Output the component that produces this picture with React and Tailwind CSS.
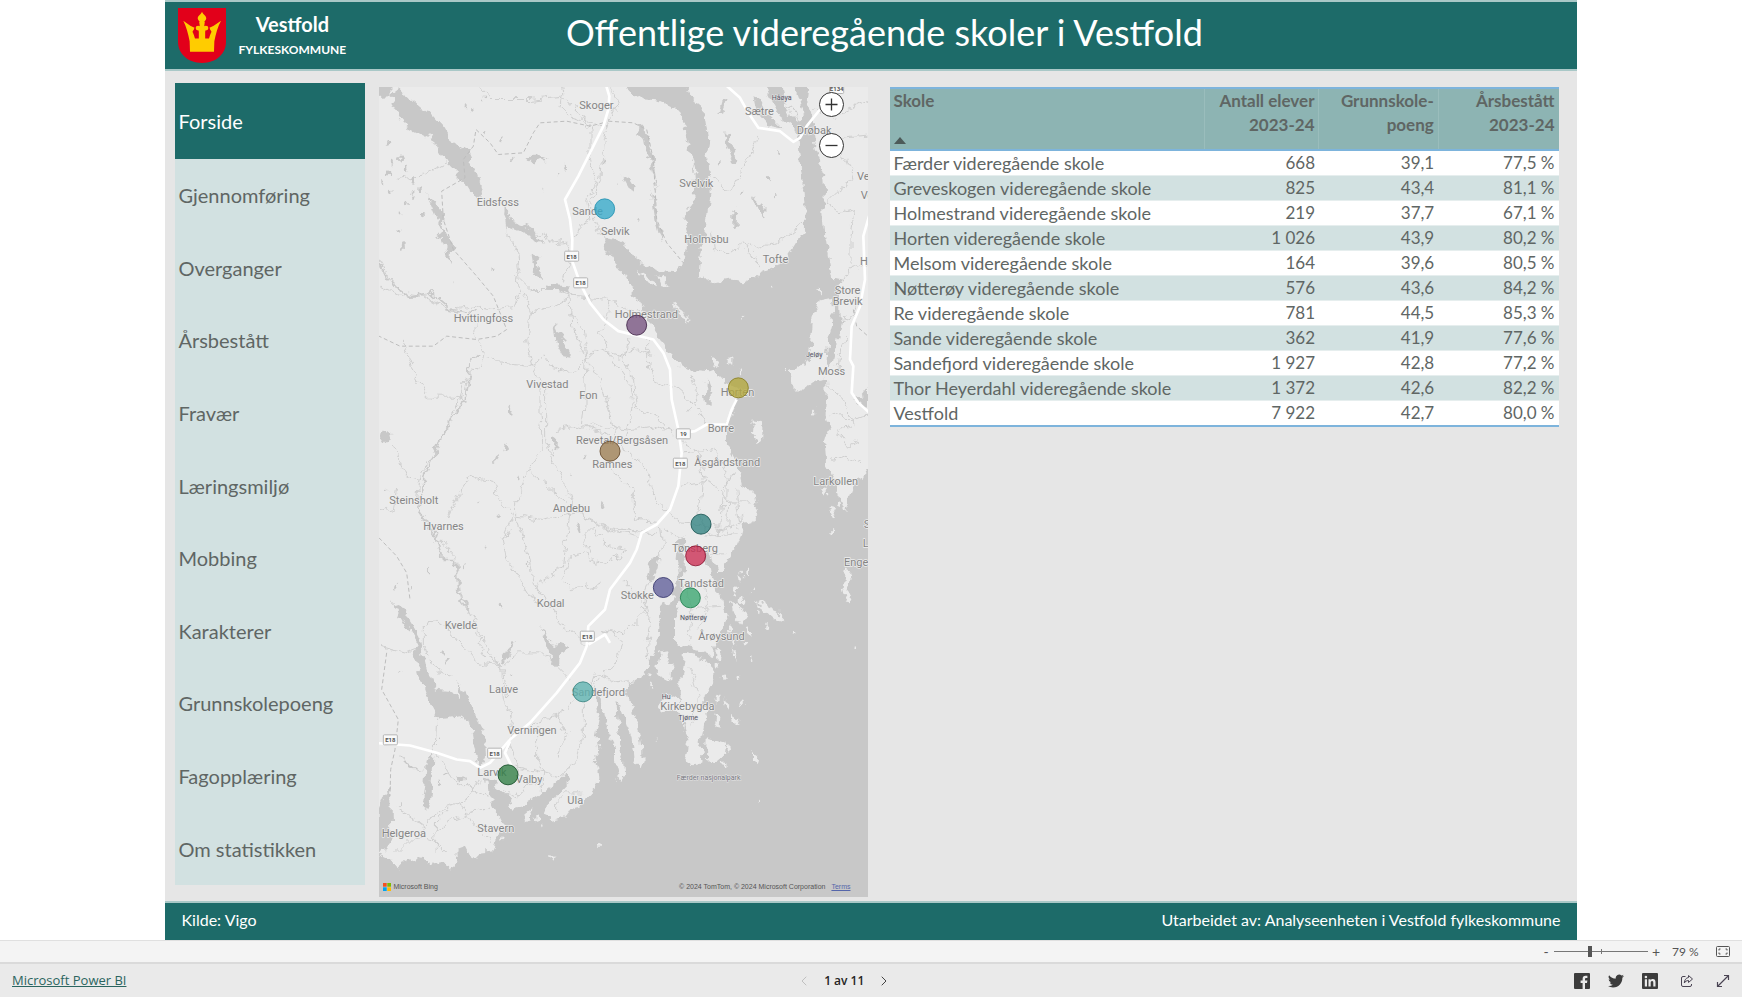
import { useState } from "react";
import { ChevronLeft, ChevronRight } from "lucide-react";

const pages = [
  "Forside",
  "Gjennomføring",
  "Overganger",
  "Årsbestått",
  "Fravær",
  "Læringsmiljø",
  "Mobbing",
  "Karakterer",
  "Grunnskolepoeng",
  "Fagopplæring",
  "Om statistikken",
];

const schools = [
  ["Færder videregående skole", "668", "39,1", "77,5 %"],
  ["Greveskogen videregående skole", "825", "43,4", "81,1 %"],
  ["Holmestrand videregående skole", "219", "37,7", "67,1 %"],
  ["Horten videregående skole", "1 026", "43,9", "80,2 %"],
  ["Melsom videregående skole", "164", "39,6", "80,5 %"],
  ["Nøtterøy videregående skole", "576", "43,6", "84,2 %"],
  ["Re videregående skole", "781", "44,5", "85,3 %"],
  ["Sande videregående skole", "362", "41,9", "77,6 %"],
  ["Sandefjord videregående skole", "1 927", "42,8", "77,2 %"],
  ["Thor Heyerdahl videregående skole", "1 372", "42,6", "82,2 %"],
  ["Vestfold", "7 922", "42,7", "80,0 %"],
];

// Map units: 3 per pixel at full size
const places = [
  ["Skoger", 628, 88],
  ["Sætre", 1125, 105],
  ["Drøbak", 1280, 162],
  ["Svelvik", 928, 321],
  ["Eidsfoss", 320, 378],
  ["Sande", 607, 405],
  ["Selvik", 693, 467],
  ["Holmsbu", 943, 489],
  ["Tofte", 1178, 551],
  ["Ve", 1461, 300],
  ["Vo", 1472, 358],
  ["H", 1470, 556],
  ["Store", 1394, 644],
  ["Brevik", 1388, 676],
  ["Holmestrand", 734, 714],
  ["Hvittingfoss", 251, 727],
  ["Moss", 1344, 886],
  ["Vivestad", 469, 926],
  ["Fon", 628, 957],
  ["Horten", 1052, 948],
  ["Borre", 1013, 1058],
  ["Revetal/Bergsåsen", 618, 1093],
  ["Ramnes", 667, 1164],
  ["Åsgårdstrand", 973, 1160],
  ["Larkollen", 1330, 1217],
  ["Steinsholt", 58, 1274],
  ["Hvarnes", 160, 1350],
  ["Andebu", 548, 1297],
  ["S", 1481, 1345],
  ["L", 1478, 1403],
  ["Tønsberg", 906, 1417],
  ["Enge", 1422, 1460],
  ["Tandstad", 925, 1521],
  ["Stokke", 752, 1557],
  ["Kodal", 500, 1583],
  ["Kvelde", 224, 1648],
  ["Årøysund", 985, 1680],
  ["Lauve", 357, 1840],
  ["Sandefjord", 605, 1848],
  ["Kirkebygda", 871, 1892],
  ["Verningen", 412, 1963],
  ["Larvik", 322, 2088],
  ["Valby", 437, 2109],
  ["Ula", 592, 2174],
  ["Stavern", 322, 2258],
  ["Helgeroa", 35, 2271],
];

const smallPlaces = [
  ["Håøya", 1205, 60],
  ["Jeløy", 1308, 833],
  ["Nøtterøy", 930, 1621],
  ["Hu", 875, 1858],
  ["Tjøme", 925, 1921],
];

const shields = [
  ["E134", 1400, 27],
  ["E18", 605, 530],
  ["E18", 632, 610],
  ["19", 940, 1063],
  ["E18", 931, 1151],
  ["E18", 652, 1670],
  ["E18", 61, 1981],
  ["E18", 374, 2021],
];

const markers = [
  ["Sande", 704, 388, "#35a9c9", "#2592b1"],
  ["Holmestrand", 800, 737, "#76527f", "#3f2347"],
  ["Horten", 1105, 925, "#b3a83c", "#8a7f23"],
  ["Re", 720, 1115, "#9c7d52", "#65492a"],
  ["Greveskogen", 993, 1334, "#318180", "#1b5654"],
  ["Færder", 977, 1429, "#cb2d52", "#8c1533"],
  ["Melsom", 880, 1524, "#605f9a", "#34346b"],
  ["Nøtterøy", 961, 1555, "#3aa56f", "#1f7f4d"],
  ["Sandefjord", 639, 1837, "#5cb2b0", "#3a8583"],
  ["Thor Heyerdahl", 414, 2086, "#2f7d44", "#18502a"],
];

const sea =
  "M765 -20 765 21 790 40 820 60 860 62 900 72 925 95 940 130 950 180 960 215 972 260 975 310 967 350 970 375 950 400 945 430 955 460 950 490 945 520 938 560 920 578 870 575 830 560 790 530 760 490 730 475 700 470 705 510 730 545 745 572 770 580 780 620 800 660 820 690 840 730 862 762 880 790 900 830 930 855 950 868 985 872 1010 875 1035 870 1050 890 1075 915 1100 925 1100 970 1080 1010 1067 1040 1065 1080 1080 1110 1095 1140 1110 1190 1120 1230 1160 1235 1165 1270 1150 1325 1120 1330 1112 1370 1100 1400 1075 1430 1065 1460 1045 1480 1030 1440 1010 1400 1000 1440 960 1445 945 1380 925 1375 920 1440 930 1500 915 1520 905 1560 885 1570 870 1610 865 1690 850 1715 835 1760 815 1795 770 1808 772 1840 790 1890 805 1940 815 1990 818 2040 808 2065 790 2035 785 1980 768 1930 755 1885 740 1870 742 1925 750 1970 750 2000 762 2045 765 2085 750 2105 735 2050 735 2000 715 1960 700 1900 690 1850 675 1830 680 1890 690 1920 680 1970 685 2010 680 2050 688 2090 680 2125 650 2155 640 2180 600 2190 580 2215 540 2225 525 2200 532 2165 560 2150 598 2110 590 2085 560 2110 530 2135 490 2160 460 2180 430 2188 412 2145 385 2125 372 2105 345 2095 350 2140 370 2180 385 2210 400 2240 378 2270 370 2315 330 2320 310 2340 290 2300 262 2310 265 2350 240 2365 225 2345 200 2360 170 2345 130 2335 100 2345 88 2370 60 2335 27 2320 -20 2310 -20 2500 1540 2500 1540 1160 1494 1170 1480 1190 1460 1200 1440 1250 1425 1290 1410 1250 1400 1210 1385 1180 1368 1150 1365 1090 1380 1040 1365 1000 1370 940 1368 895 1340 900 1300 930 1268 930 1262 870 1305 860 1320 830 1325 770 1330 720 1350 662 1385 655 1392 720 1375 780 1370 840 1380 870 1400 790 1412 720 1410 640 1415 600 1390 595 1378 540 1366 470 1360 400 1365 340 1362 280 1345 230 1335 180 1325 120 1318 90 1310 60 1320 -20 1275 -20 1270 30 1290 60 1300 100 1290 125 1260 110 1240 60 1230 -20 1180 -20 1200 60 1230 110 1270 140 1285 180 1290 230 1300 300 1306 370 1308 450 1275 490 1250 530 1220 560 1180 575 1150 590 1120 605 1080 600 1040 608 1010 600 985 590 990 540 1003 470 1018 400 1025 330 1020 280 1010 230 1018 180 1010 130 1005 100 990 85 975 60 950 40 935 -20Z";

const islands = [
  "M948 1360 1004 1360 1002 1420 1018 1500 948 1500 942 1430Z",
  "M940 1480 990 1470 1030 1500 1060 1560 1070 1610 1040 1680 1025 1730 990 1712 945 1700 915 1690 915 1620 930 1570Z",
  "M945 1725 995 1740 1030 1760 1030 1800 1000 1850 1010 1900 1000 1950 990 2000 998 2040 965 2060 948 2035 955 1985 940 1930 925 1870 935 1800Z",
  "M1010 1970 1040 1980 1070 1990 1065 2030 1030 2045 1008 2035Z",
  "M870 1720 890 1715 905 1760 900 1805 880 1800 860 1780Z",
  "M890 1840 920 1850 935 1900 905 1890 870 1900Z",
  "M1145 1020 1180 1025 1180 1080 1165 1090 1143 1065Z",
  "M1425 1470 1445 1480 1435 1540 1450 1570 1430 1565 1418 1520Z",
  "M1152 2015 1165 2025 1160 2055 1152 2040Z",
  "M865 590 885 595 905 620 880 625Z",
  "M800 570 835 590 855 620 830 610Z",
  "M905 670 930 690 960 730 930 715Z",
  "M1115 705 1123 712 1118 730Z",
  "M1070 840 1090 830 1090 855 1070 855Z",
  "M1020 830 1040 840 1050 860 1020 850Z",
  "M1350 1225 1372 1230 1360 1242Z",
  "M1378 1285 1400 1290 1390 1310Z",
  "M1335 630 1350 628 1350 645Z",
  "M530 2330 560 2332 545 2340Z",
  "M460 2205 480 2190 485 2220 465 2225Z",
  "M1085 1560 1105 1580 1130 1610 1120 1640 1095 1610Z",
  "M1160 1560 1180 1575 1215 1590 1250 1625 1215 1620 1180 1590Z",
  "M1040 1700 1055 1715 1050 1740 1038 1730Z",
  "M1080 1900 1105 1920 1100 1945 1085 1930Z",
  "M1035 1900 1048 1920 1045 1950 1030 1930Z",
  "M1060 1860 1075 1870 1070 1885Z",
  "M1085 1700 1100 1740 1090 1735Z",
  "M1105 1480 1120 1495 1110 1510Z",
];

const lakes = [
  "M-20 -20 60 -20 62 50 -20 55Z",
  "M62 45 92 22 115 55 150 85 190 110 220 145 240 180 290 215 305 250 325 290 336 330 330 355 300 340 275 300 240 265 215 225 190 180 150 160 110 140 85 110 70 75Z",
  "M395 380 415 400 430 425 470 440 500 460 520 490 480 470 440 450 415 440 410 415Z",
  "M485 530 505 525 500 560 522 595 505 600 492 570Z",
  "M530 615 590 620 600 645 570 632 535 630Z",
  "M552 725 570 760 605 835 580 830 560 790Z",
  "M170 340 195 370 220 400 215 440 250 500 245 560 235 530 215 475 190 470 215 455 200 410Z",
  "M35 1050 60 1060 65 1085 40 1085 30 1070Z",
  "M550 1075 562 1080 558 1110 548 1095Z",
  "M415 985 425 995 418 1015 408 1000Z",
  "M1010 900 1025 940 1025 985 1010 985 1003 940Z",
  "M1060 155 1075 165 1105 240 1090 255 1070 200Z",
  "M1090 390 1105 400 1102 450 1090 440Z",
  "M1150 340 1165 370 1190 390 1185 410 1160 385Z",
  "M755 285 780 300 793 320 790 345 775 320Z",
  "M795 160 810 140 828 160 850 240 862 330 850 290 825 200 820 170Z",
  "M845 330 856 370 870 450 880 490 862 460 852 400Z",
  "M470 230 500 228 530 240 490 250Z",
  "M1070 60 1055 100 1045 105 1055 65Z",
  "M1150 50 1175 60 1200 110 1240 150 1200 140 1160 95Z",
  "M845 1435 867 1430 862 1470 840 1510 830 1490Z",
  "M615 1330 625 1330 635 1350 628 1360Z",
  "M700 1258 710 1268 698 1285Z",
  "M405 1090 415 1110 400 1115Z",
  "M65 1565 100 1590 125 1630 150 1680 170 1770 195 1830 240 1835 275 1860 262 1800 290 1850 312 1900 345 1960 348 2030 333 2060 312 2000 300 1930 270 1910 205 1920 178 1870 150 1790 130 1720 140 1690 110 1640Z",
  "M510 1635 530 1670 555 1700 580 1685 595 1705 570 1725 560 1760 540 1740 530 1690Z",
  "M435 1680 425 1710 400 1750 390 1745 405 1715Z",
  "M40 2150 60 2125 65 2290 50 2310 20 2320 20 2200Z",
  "M170 2050 190 2020 188 2080 178 2180 155 2190 165 2130Z",
  "M265 2085 285 2095 270 2105Z",
  "M85 2030 130 2060 165 2070 120 2065Z",
  "M1494 920 1465 955 1450 960 1480 990 1494 990Z",
];

const minorRoads = [
  "M270 0 340 30 360 60 480 60 575 50 570 80 600 110 700 140",
  "M575 21 580 60 640 110 660 150 660 240 680 310 650 360 660 420 630 440 615 480",
  "M720 21 745 70 715 130 700 180 690 290 665 370 680 440 720 520",
  "M415 400 415 460 440 520 450 600 480 630 560 630 600 650 720 660 770 690 840 700",
  "M500 460 550 490 590 485 600 530 580 600",
  "M440 590 450 640 440 680 350 690 310 680 230 690 160 650 90 650 30 620",
  "M320 720 315 780 345 820 325 860 290 890 270 960 200 1100 150 1200 140 1280 180 1350 215 1390 260 1440 270 1560 310 1620 340 1720 395 1760",
  "M100 790 130 880 170 950 250 950 290 960",
  "M460 640 480 700 470 790 490 860 510 920 510 1010 520 1110 475 1170 440 1260 440 1310 470 1400 490 1510 550 1600 580 1650",
  "M480 700 520 690 600 650 605 740 640 820 700 920 720 1000 740 1090 830 1170 860 1270 930 1330 1050 1340",
  "M345 830 380 850 480 860 520 830 560 880 620 870 660 830 700 810 750 830 800 810 850 830",
  "M600 700 640 750 650 830 645 900 645 980 640 1040 690 1040 790 1050 850 1040 910 1060",
  "M530 910 530 1080 540 1130 580 1200 620 1300 700 1340 800 1360",
  "M720 660 710 720 690 760 720 830 780 920 790 980 770 1070",
  "M780 770 760 840 790 900 800 990 860 1010 880 1040",
  "M830 780 830 850 860 910 900 920",
  "M910 920 970 970 1010 1030",
  "M960 890 985 950 950 1000",
  "M560 1050 620 1040 700 1060 740 1090",
  "M720 1160 790 1230 790 1320 870 1330",
  "M475 1170 520 1210 600 1280 700 1350 860 1360",
  "M440 1310 520 1320 570 1310 620 1300",
  "M300 1190 370 1210 390 1270 430 1310 400 1380 410 1440 450 1500 500 1580",
  "M300 1190 260 1250 235 1310",
  "M600 1300 590 1370 580 1460 500 1520",
  "M660 1420 640 1370 670 1340 710 1400 770 1410 700 1460 640 1420 600 1430 580 1500 610 1530 700 1510",
  "M870 1340 900 1360 930 1370 1000 1370 1100 1360",
  "M1000 1210 990 1300 1010 1360 1050 1370 1060 1240 1090 1180",
  "M930 1220 1000 1210 1040 1220 1080 1270 1150 1270",
  "M930 1080 990 1120 1000 1200",
  "M940 1120 1040 1110 1075 1200 1070 1360",
  "M1100 1230 1115 1330 1060 1350 1030 1340",
  "M980 1370 1000 1420 1060 1420",
  "M875 1340 880 1400 860 1450 820 1550 840 1620 830 1700 840 1760",
  "M800 1370 740 1360 690 1340",
  "M760 1500 800 1540 830 1600 790 1640 740 1660 700 1650",
  "M700 1650 760 1680 740 1740 690 1790 660 1850",
  "M580 1640 620 1670 650 1700",
  "M600 1800 560 1760 510 1720 440 1720 395 1760 400 1860 430 1930 415 2010",
  "M340 1720 400 1770 410 1850",
  "M395 1760 320 1750 280 1700 230 1640 200 1620 160 1640 160 1700 210 1780 250 1790",
  "M310 1620 350 1700 390 1760",
  "M480 1930 560 1910 620 1860",
  "M640 1860 640 1960 620 2030 580 2090 520 2080 430 2060",
  "M660 1840 680 1780 740 1810 790 1800",
  "M415 1980 440 2050 445 2110",
  "M500 1940 500 2040 520 2080 520 2140",
  "M560 1900 590 1970 560 2030",
  "M200 1920 195 2020 250 2100 310 2130 350 2150",
  "M270 2180 310 2120 340 2100",
  "M90 2190 160 2240 230 2180 270 2170 310 2230 360 2290",
  "M190 2260 250 2220 320 2190 360 2180",
  "M80 2320 130 2270 190 2280 230 2320",
  "M240 2180 200 2220 195 2320",
  "M400 2130 440 2160 470 2120 520 2100",
  "M560 2200 560 2170 590 2140 640 2140",
  "M27 1700 100 1720 150 1700",
  "M940 1500 960 1600 950 1690",
  "M1000 1500 1010 1580 970 1640",
  "M960 1760 980 1850 960 1940",
  "M1030 300 1080 340 1140 230 1160 170",
  "M1025 460 1030 510 1080 520 1120 490 1170 560",
  "M1130 490 1160 510 1240 480 1300 430",
  "M1340 150 1400 200 1430 240 1450 300 1400 340 1370 370 1410 400 1450 390 1440 470 1440 560",
  "M1330 90 1400 110 1494 60",
  "M1360 180 1494 170",
  "M1415 610 1440 570 1494 550",
  "M1410 730 1450 700 1480 640",
  "M1375 920 1420 960 1450 1030 1400 1060 1430 1100 1470 1080",
  "M1385 1000 1450 1020 1494 1010",
  "M1390 1140 1430 1130 1470 1150",
  "M1430 770 1405 830 1400 880",
  "M27 540 60 600 100 640 170 650 230 690",
  "M80 300 150 290 225 250",
  "M30 1300 70 1290 80 1230",
  "M70 1100 110 1190 145 1200",
];

const borders = [
  "M700 130 660 140 590 125 510 130 490 160 460 220 385 225 360 190 318 150 310 200 280 240 285 295 215 335 220 420 250 510 320 590 370 650 410 750 380 770 320 780 230 770 190 800 90 800 27 770",
  "M715 125 790 130 830 150 850 240 855 320 860 420 890 490 940 550",
  "M27 1375 80 1430 110 1480 120 1560",
  "M50 1720 35 1830 85 1920 75 2010 62 2070 60 2150",
  "M1450 690 1460 740 1494 770",
];

const mainRoads = [
  "M700 -10 718 50 715 90 700 140 660 220 625 290 585 360 600 420 607 480 605 540 630 610 660 670 700 720 745 755 850 780 880 820 900 870 905 960 925 1050 935 1120 925 1220 900 1290 860 1335 815 1360 800 1410 780 1450 720 1530 705 1590 655 1640 650 1700 630 1750 560 1840 480 1930 420 1980 360 2050 330 2065 300 2045 260 2040 200 2020 120 1998 10 1990",
  "M940 1060 975 1055 1010 1035 1070 1035 1085 990 1100 960",
  "M1060 10 1110 55 1135 100 1165 145 1230 155 1270 187 1290 175 1310 140 1350 90",
  "M1500 400 1480 470 1485 600 1470 680 1445 740 1440 840 1450 860 1445 940 1465 970 1510 1010",
  "M420 1985 405 2020 425 2060",
  "M655 1695 705 1665 720 1690",
];

// Small tarns spread over the inland areas: x, y, length
const tarns = [
  [120, 130, 14], [290, 80, 12], [310, 95, 16], [340, 62, 10], [345, 160, 12],
  [50, 190, 18], [90, 240, 24], [110, 270, 22], [70, 250, 18], [130, 300, 26],
  [60, 280, 16], [150, 330, 20], [110, 370, 14], [90, 400, 16], [160, 410, 18],
  [60, 340, 18], [85, 455, 12], [100, 500, 18], [130, 345, 14], [40, 310, 14],
  [585, 260, 16], [560, 285, 10], [520, 330, 10], [740, 315, 10], [805, 420, 10],
  [395, 178, 10], [425, 238, 16], [370, 570, 12], [250, 605, 8], [1135, 90, 14],
  [1200, 300, 16], [1115, 340, 14], [1215, 350, 14], [1230, 220, 12], [1045, 250, 12],
  [700, 250, 12], [375, 1140, 16], [550, 1120, 10], [445, 1200, 12], [325, 1265, 8],
  [380, 1305, 14], [350, 1400, 10], [180, 1475, 14], [280, 1460, 12], [75, 1520, 16],
  [390, 1580, 14], [215, 1720, 12], [230, 1745, 14], [85, 1775, 8], [215, 1980, 8],
  [225, 2080, 16], [210, 2110, 14], [90, 2175, 10], [430, 1780, 10], [470, 1455, 10],
  [640, 1140, 14], [410, 1430, 12], [600, 1180, 8], [120, 1530, 12], [50, 1230, 8],
];

// Skerries off the coast
const skerries = [
  [1110, 880, 8], [1335, 995, 8], [1250, 877, 5], [1385, 1350, 9], [1405, 1270, 10],
  [1130, 1480, 9], [1145, 1535, 8], [1095, 1530, 12], [1110, 1560, 14], [1165, 1600, 8],
  [1190, 1640, 9], [1135, 1660, 10], [1125, 1690, 8], [1270, 1660, 6], [1460, 1703, 7],
  [1045, 1760, 10], [1060, 1790, 8], [1040, 1860, 12], [1115, 1870, 7], [1075, 2010, 9],
  [1060, 2050, 7], [1020, 1650, 8], [860, 1980, 5], [840, 1790, 9], [845, 1820, 8],
  [690, 2300, 6], [500, 2220, 10], [520, 2240, 7], [400, 2275, 7], [1160, 2165, 4],
  [1110, 1790, 8], [1080, 1650, 12], [1095, 1690, 10], [1145, 1740, 5], [980, 1900, 7],
  [1210, 625, 5], [885, 1870, 7], [1380, 1240, 8],
];

function Crest() {
  return (
    <svg
      viewBox="50 27 136 164"
      preserveAspectRatio="none"
      className="h-[55px] w-12"
      role="img"
      aria-label="Vestfold fylkesvåpen"
    >
      <path d="M50 27H186V128C186 164 158 191 118 191S50 164 50 128Z" fill="#e2001a" />
      <g fill="#ffcc00">
        <path d="M84 157 83 126C79 104 73 82 65 65L86 81 97 86 91 98C95 106 97 114 99 122H109V98L106 82H130L127 98V122H137C139 114 141 106 145 98L139 86 150 81 172 65C163 82 157 104 153 126L152 157Z" />
        <path d="M84 157 85 118H151L152 157Z" />
        <path d="M118 38C121 47 131 50 130 59C129 64 125 66 123 70H113C111 66 107 64 106 59C105 50 115 47 118 38Z" />
        <path d="M110 68H126L124 84H112Z" />
        <circle cx="87" cy="90" r="7" />
        <circle cx="149" cy="90" r="7" />
        <circle cx="107" cy="87" r="7" />
        <circle cx="129" cy="87" r="7" />
      </g>
    </svg>
  );
}

function MapView() {
  return (
    <div className="relative h-full overflow-hidden bg-[#ebebeb]">
      <svg
        viewBox="27 21 1467 2433"
        preserveAspectRatio="xMidYMid slice"
        className="absolute inset-0 h-full w-full"
      >
        <defs>
          <filter id="coast" x="-5%" y="-5%" width="110%" height="110%" colorInterpolationFilters="sRGB">
            <feTurbulence type="fractalNoise" baseFrequency="0.035" numOctaves="3" seed="4" />
            <feDisplacementMap in="SourceGraphic" scale="34" xChannelSelector="R" yChannelSelector="G" />
          </filter>
        </defs>
        <g filter="url(#coast)">
          <rect x="-20" y="-20" width="1560" height="2540" fill="#ebebeb" />
          <g fill="none" stroke="#cfcfcf" strokeWidth="3" strokeLinejoin="round">
            {minorRoads.map((d) => (
              <path key={d} d={d} />
            ))}
          </g>
          <g fill="#c8c8c8">
            <path d={sea} />
            {lakes.map((d) => (
              <path key={d} d={d} />
            ))}
            {tarns.map(([x, y, r]) => (
              <ellipse key={`${x}-${y}`} cx={x} cy={y} rx={r / 4} ry={r / 2} transform={`rotate(${(x * 7) % 70} ${x} ${y})`} />
            ))}
          </g>
          <g fill="#ebebeb">
            {islands.map((d) => (
              <path key={d} d={d} />
            ))}
            {skerries.map(([x, y, r]) => (
              <ellipse key={`${x}-${y}`} cx={x} cy={y} rx={r / 2} ry={r} />
            ))}
          </g>
          <g fill="none" stroke="#c9c9c9" strokeWidth="3">
            <path d="M1240 60 1280 110 1300 140" />
            <path d="M30 560 60 610 120 650 180 640 240 690 320 700" strokeWidth="5" />
            <path d="M330 820 300 850 285 960 210 1080 165 1190 145 1290 200 1370 215 1440 255 1440 265 1540 300 1600" strokeWidth="5" />
            <path d="M945 1510 965 1600 955 1690M1000 1510 1015 1590 985 1650M950 1590 1050 1580M960 1760 985 1850 965 1940" stroke="#d3d3d3" />
          </g>
        </g>
        <g fill="none" stroke="#bdbdbd" strokeWidth="3" strokeDasharray="12 8">
          {borders.map((d) => (
            <path key={d} d={d} />
          ))}
        </g>
        <g fill="none" stroke="#ffffff" strokeWidth="8" strokeLinejoin="round">
          {mainRoads.map((d) => (
            <path key={d} d={d} />
          ))}
        </g>
        {shields.map(([name, x, y]) => (
          <g key={`${name}-${y}`}>
            <rect x={x - 21} y={y - 15} width="42" height="30" rx="3" fill="#fafafa" stroke="#b5b5b5" strokeWidth="3" />
            <text x={x} y={y + 7} textAnchor="middle" fontSize="18" fontWeight="700" fill="#555555">
              {name}
            </text>
          </g>
        ))}
        <g fontSize="33" fill="#858585" stroke="#efefef" strokeWidth="4" strokeLinejoin="round" paintOrder="stroke">
          {places.map(([name, x, y]) => (
            <text key={name} x={x} y={y}>
              {name}
            </text>
          ))}
        </g>
        <g fontSize="21" fill="#555566" stroke="#e4e4e4" strokeWidth="3" paintOrder="stroke">
          {smallPlaces.map(([name, x, y]) => (
            <text key={name} x={x} y={y}>
              {name}
            </text>
          ))}
          <text x="920" y="2102" fill="#77777f">Færder nasjonalpark</text>
        </g>
        {markers.map(([name, x, y, fill, stroke]) => (
          <circle key={name} cx={x} cy={y} r="30" fill={fill} fillOpacity="0.78" stroke={stroke} strokeOpacity="0.85" strokeWidth="3" />
        ))}
      </svg>

      {/* Zoom buttons */}
      <div className="absolute top-[5px] right-6 flex flex-col gap-4">
        <button aria-label="Zoom inn" className="h-[25px] w-[25px] rounded-full border border-[#333333] bg-white">
          <svg viewBox="0 0 25 25" className="-m-px h-[25px] w-[25px]" stroke="#333333" strokeWidth="1.3">
            <path d="M6.5 12.5H18.5M12.5 6.5V18.5" />
          </svg>
        </button>
        <button aria-label="Zoom ut" className="h-[25px] w-[25px] rounded-full border border-[#333333] bg-white">
          <svg viewBox="0 0 25 25" className="-m-px h-[25px] w-[25px]" stroke="#333333" strokeWidth="1.3">
            <path d="M6.5 12.5H18.5" />
          </svg>
        </button>
      </div>

      {/* Attribution */}
      <div className="absolute inset-x-0 bottom-1 flex items-center justify-between pr-[18px] pl-1 font-['Liberation_Sans',sans-serif] text-[7px] leading-[12px] text-[#555555]">
        <span className="flex items-center gap-[2px]">
          <svg viewBox="0 0 8 8" className="h-2 w-2">
            <path d="M0 0H3.7V3.7H0Z" fill="#f25022" />
            <path d="M4.3 0H8V3.7H4.3Z" fill="#7fba00" />
            <path d="M0 4.3H3.7V8H0Z" fill="#00a4ef" />
            <path d="M4.3 4.3H8V8H4.3Z" fill="#ffb900" />
          </svg>
          Microsoft Bing
        </span>
        <span className="flex gap-[6px]">
          © 2024 TomTom, © 2024 Microsoft Corporation
          <a href="#terms" className="text-[#5566aa] underline">
            Terms
          </a>
        </span>
      </div>
    </div>
  );
}

function SchoolTable() {
  return (
    <table className="w-full table-fixed border-y-2 border-[#7db4dc] text-[17px] leading-6 text-[#5f6664]">
      <colgroup>
        <col className="w-[47%]" />
        <col className="w-[17%]" />
        <col className="w-[18%]" />
        <col className="w-[18%]" />
      </colgroup>
      <thead>
        <tr className="h-[62px] border-b-2 border-[#7db4dc] bg-[#8db4b3] align-top font-bold">
          <th className="px-[3px] text-left">
            Skole
            <svg viewBox="0 0 12 7" className="mt-6 ml-px h-[7px] w-3" fill="#4d5a59">
              <path d="M0 7 6 0 12 7Z" />
            </svg>
          </th>
          <th className="border-l border-[#9abdbc] px-[3px] text-right">
            Antall elever
            <br />
            2023-24
          </th>
          <th className="border-l border-[#9abdbc] px-1 text-right">
            Grunnskole-
            <br />
            poeng
          </th>
          <th className="border-l border-[#9abdbc] px-1 text-right">
            Årsbestått
            <br />
            2023-24
          </th>
        </tr>
      </thead>
      <tbody>
        {schools.map(([name, pupils, points, passed]) => (
          <tr key={name} className="border-b border-[#e6eeee] bg-white last:border-0 even:bg-[#d2e1e1]">
            <td className="px-[3px] text-[18px]">{name}</td>
            <td className="px-[3px] text-right">{pupils}</td>
            <td className="px-1 text-right">{points}</td>
            <td className="px-1 text-right">{passed}</td>
          </tr>
        ))}
      </tbody>
    </table>
  );
}

function StatusBar() {
  const [zoom, setZoom] = useState(38);

  return (
    <div className="flex h-[22px] items-center justify-end border-t border-[#e0e0e0] bg-[#f4f4f4] pr-3 text-[#555555]">
      <button aria-label="Zoom ut" className="w-4 text-sm leading-5">
        -
      </button>
      <div className="relative flex h-5 w-[94px] items-center">
        <span className="absolute left-[47px] h-[5px] w-px bg-[#777777]" />
        <input
          type="range"
          aria-label="Zoomnivå"
          value={zoom}
          onChange={(e) => setZoom(e.target.value)}
          className="relative h-5 w-full appearance-none bg-transparent [&::-webkit-slider-runnable-track]:h-px [&::-webkit-slider-runnable-track]:bg-[#777777] [&::-webkit-slider-thumb]:-mt-[5px] [&::-webkit-slider-thumb]:h-[11px] [&::-webkit-slider-thumb]:w-1 [&::-webkit-slider-thumb]:appearance-none [&::-webkit-slider-thumb]:bg-[#555555]"
        />
      </div>
      <button aria-label="Zoom inn" className="w-4 text-sm leading-5">
        +
      </button>
      <span className="w-10 pl-2 text-xs whitespace-nowrap">79 %</span>
      <button aria-label="Tilpass til siden" className="ml-3">
        <svg viewBox="0 0 14 11" className="h-[11px] w-[14px]" fill="none" stroke="#555555">
          <rect x="0.5" y="0.5" width="13" height="10" rx="1" />
          <path d="M3 4.5V3H4.5M9.5 3H11V4.5M11 6.5V8H9.5M4.5 8H3V6.5" />
        </svg>
      </button>
    </div>
  );
}

function EmbedBar() {
  return (
    <div className="flex h-[35px] items-center justify-between border-t-2 border-[#dadada] bg-[#eaeaea] px-3 font-['Open_Sans','Noto_Sans',sans-serif] text-xs">
      <a href="#powerbi" className="text-[13px] text-[#2b6560] underline">
        Microsoft Power BI
      </a>
      <div className="mr-3 flex items-center gap-3">
        <button aria-label="Forrige side" disabled className="text-[#c0c0c0]">
          <ChevronLeft size={16} strokeWidth={1.5} />
        </button>
        <span className="font-semibold text-[#252423]">1 av 11</span>
        <button aria-label="Neste side" className="text-[#444444]">
          <ChevronRight size={16} strokeWidth={1.5} />
        </button>
      </div>
      <div className="flex items-center gap-[18px] text-[#3c3c3c]">
        <a href="#facebook" aria-label="Facebook">
          <svg viewBox="0 0 16 16" className="h-4 w-4">
            <path d="M1 0H15Q16 0 16 1V15Q16 16 15 16H11V10H13L13.4 7.6H11V6.2C11 5.4 11.4 5 12.2 5H13.4V2.8H11.6C9.6 2.8 8.6 4 8.6 5.9V7.6H6.6V10H8.6V16H1Q0 16 0 15V1Q0 0 1 0Z" fill="currentColor" />
          </svg>
        </a>
        <a href="#twitter" aria-label="Twitter">
          <svg viewBox="0 0 24 24" className="h-4 w-4">
            <path
              d="M23.9 4.6c-.9.4-1.8.7-2.8.8 1-.6 1.8-1.6 2.2-2.7-1 .6-2 1-3.1 1.2a4.9 4.9 0 0 0-8.4 4.5C7.7 8.2 4.1 6.3 1.7 3.2a4.9 4.9 0 0 0 1.5 6.6c-.8 0-1.6-.2-2.2-.6v.1a4.9 4.9 0 0 0 3.9 4.8c-.7.2-1.5.2-2.2.1a4.9 4.9 0 0 0 4.6 3.4A9.9 9.9 0 0 1 0 19.5 14 14 0 0 0 7.5 21.7c9.1 0 14-7.5 14-14v-.6c1-.7 1.8-1.6 2.4-2.5z"
              fill="currentColor"
            />
          </svg>
        </a>
        <a href="#linkedin" aria-label="LinkedIn">
          <svg viewBox="0 0 16 16" className="h-4 w-4">
            <rect width="16" height="16" rx="1" fill="currentColor" />
            <g fill="#eaeaea">
              <circle cx="3.9" cy="4" r="1.3" />
              <path d="M2.8 6.2H5V13.5H2.8ZM6.5 6.2H8.6V7.2C9 6.5 9.8 6 10.9 6 13 6 13.5 7.4 13.5 9.3V13.5H11.3V9.8C11.3 8.8 11.2 7.9 10.1 7.9S8.7 8.8 8.7 9.7V13.5H6.5Z" />
            </g>
          </svg>
        </a>
        <button aria-label="Del" className="ml-1">
          <svg viewBox="0 0 14 14" className="h-[14px] w-[14px]" fill="none" stroke="#4a4453" strokeLinejoin="round">
            <path d="M5.5 2.5H3Q1.5 2.5 1.5 4V11Q1.5 12.5 3 12.5H10Q11.5 12.5 11.5 11V10" />
            <path d="M8.5 1.5 12.5 5 8.5 8.5V6.5C6.5 6.5 5.2 7.5 4.3 9 4.5 6 6 3.8 8.5 3.5Z" />
          </svg>
        </button>
        <button aria-label="Fullskjerm" className="ml-1">
          <svg viewBox="0 0 14 14" className="h-[14px] w-[14px]" fill="none" stroke="#4a4453" strokeWidth="1.2">
            <path d="M1.5 12.5 12.5 1.5M8 1.5H12.5V6M1.5 8V12.5H6" />
          </svg>
        </button>
      </div>
    </div>
  );
}

export default function App() {
  const [active, setActive] = useState("Forside");

  return (
    <div className="flex min-h-screen flex-col bg-white font-[Lato,sans-serif]">
      <main className="mx-auto flex w-[81%] flex-1 flex-col bg-[#e6e6e6]">
        <header className="flex h-[71px] items-center border-y-2 border-[#a9c8c7] bg-[#1d6b69] pr-3 pl-[13px] text-white">
          <div className="flex items-center gap-3">
            <Crest />
            <div className="text-center font-bold">
              <p className="text-xl leading-7">Vestfold</p>
              <p className="text-xs leading-6">FYLKESKOMMUNE</p>
            </div>
          </div>
          <h1 className="flex-1 pr-[142px] pb-2 text-center text-[36px] leading-[48px]">
            Offentlige videregående skoler i Vestfold
          </h1>
        </header>

        <div className="grid flex-1 grid-cols-[190fr_489fr_676fr] gap-[14px] pr-[18px] pl-[10px]">
          <nav className="mt-3 mb-4 flex flex-col bg-[#d2e1e1] text-[20px]">
            {pages.map((page) => (
              <button
                key={page}
                onClick={() => setActive(page)}
                className={
                  page === active
                    ? "h-[76px] bg-[#1d6b69] px-[3px] text-left text-white"
                    : "flex-1 px-[3px] text-left text-[#5f6664]"
                }
              >
                {page}
              </button>
            ))}
          </nav>
          <div className="mt-4 mb-1 font-[Roboto,sans-serif]">
            <MapView />
          </div>
          <div className="mt-4 pl-2">
            <SchoolTable />
          </div>
        </div>

        <footer className="flex h-[39px] items-center justify-between border-t-2 border-[#a9c8c7] bg-[#1d6b69] px-4 pb-1 text-base text-white">
          <span>Kilde: Vigo</span>
          <span>Utarbeidet av: Analyseenheten i Vestfold fylkeskommune</span>
        </footer>
      </main>
      <StatusBar />
      <EmbedBar />
    </div>
  );
}
